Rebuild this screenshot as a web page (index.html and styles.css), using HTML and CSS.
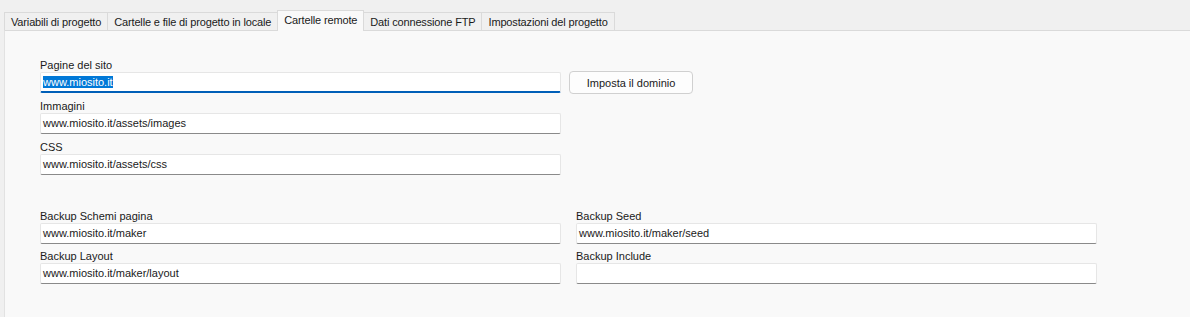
FILE: index.html
```html
<html>
    <head>
        <meta charset="utf-8">
        <title>Cartelle remote</title>
        <link rel="stylesheet" href="styles.css">
    </head>
    <body>
        <div class="tabbar">
            <div class="tab">Variabili di progetto</div>
            <div class="tab">Cartelle e file di progetto in locale</div>
            <div class="tab active">Cartelle remote</div>
            <div class="tab">Dati connessione FTP</div>
            <div class="tab">Impostazioni del progetto</div>
        </div>
        <div class="panel">
            <div class="group main">
                <div class="field">
                    <label>Pagine del sito</label>
                    <div class="input focus"><span class="sel">www.miosito.it</span></div>
                </div>
                <button class="button" type="button">Imposta il dominio</button>
                <div class="field">
                    <label>Immagini</label>
                    <div class="input">www.miosito.it/assets/images</div>
                </div>
                <div></div>
                <div class="field">
                    <label>CSS</label>
                    <div class="input">www.miosito.it/assets/css</div>
                </div>
            </div>
            <div class="group backup">
                <div class="field">
                    <label>Backup Schemi pagina</label>
                    <div class="input">www.miosito.it/maker</div>
                </div>
                <div class="field">
                    <label>Backup Seed</label>
                    <div class="input">www.miosito.it/maker/seed</div>
                </div>
                <div class="field">
                    <label>Backup Layout</label>
                    <div class="input">www.miosito.it/maker/layout</div>
                </div>
                <div class="field">
                    <label>Backup Include</label>
                    <div class="input"></div>
                </div>
            </div>
        </div>
    </body>
</html>
```

FILE: styles.css
```css
body {
    margin: 0;
    height: 317px;
    display: flex;
    flex-direction: column;
    background-color: #f0f0f0;
    font-family: "Liberation Sans", Arial, sans-serif;
    font-size: 11px;
    color: #1a1a1a;
}
.tabbar {
    display: flex;
    align-items: flex-end;
    height: 30px;
    padding-left: 4px;
}
.tab {
    height: 17px;
    line-height: 18px;
    padding: 0 6px;
    margin-right: -1px;
    border: 1px solid #dadada;
    border-bottom: none;
    background-color: #f0f0f0;
    letter-spacing: -0.15px;
    white-space: nowrap;
}
.tab.active {
    position: relative;
    z-index: 1;
    height: 20px;
    line-height: 18px;
    margin-bottom: -1px;
    background-color: #f9f9f9;
}
.panel {
    flex: 1;
    margin-left: 4px;
    padding: 25px 0 0 35px;
    border-top: 1px solid #dadada;
    border-left: 1px solid #e2e2e2;
    background-color: #f9f9f9;
}
.group {
    display: grid;
    row-gap: 4px;
}
.main {
    grid-template-columns: 521px 124px;
    column-gap: 8px;
}
.backup {
    margin-top: 32px;
    row-gap: 3px;
    grid-template-columns: 521px 521px;
    column-gap: 15px;
}
.field label {
    display: block;
    height: 16px;
    line-height: 18px;
}
.input {
    box-sizing: border-box;
    height: 21px;
    line-height: 19px;
    padding: 0 2px;
    background-color: #ffffff;
    border: 1px solid #e6e6e6;
    border-bottom-color: #8a8a8a;
    border-radius: 2px;
    white-space: nowrap;
}
.input.focus {
    border-bottom: 2px solid #005fb8;
}
.sel {
    background-color: #0078d7;
    color: #ffffff;
}
.button {
    align-self: end;
    height: 23px;
    margin-bottom: -1px;
    background-color: #fdfdfd;
    border: 1px solid #d0d0d0;
    border-radius: 4px;
    font-family: "Liberation Sans", Arial, sans-serif;
    font-size: 11px;
    color: #1a1a1a;
}
```
